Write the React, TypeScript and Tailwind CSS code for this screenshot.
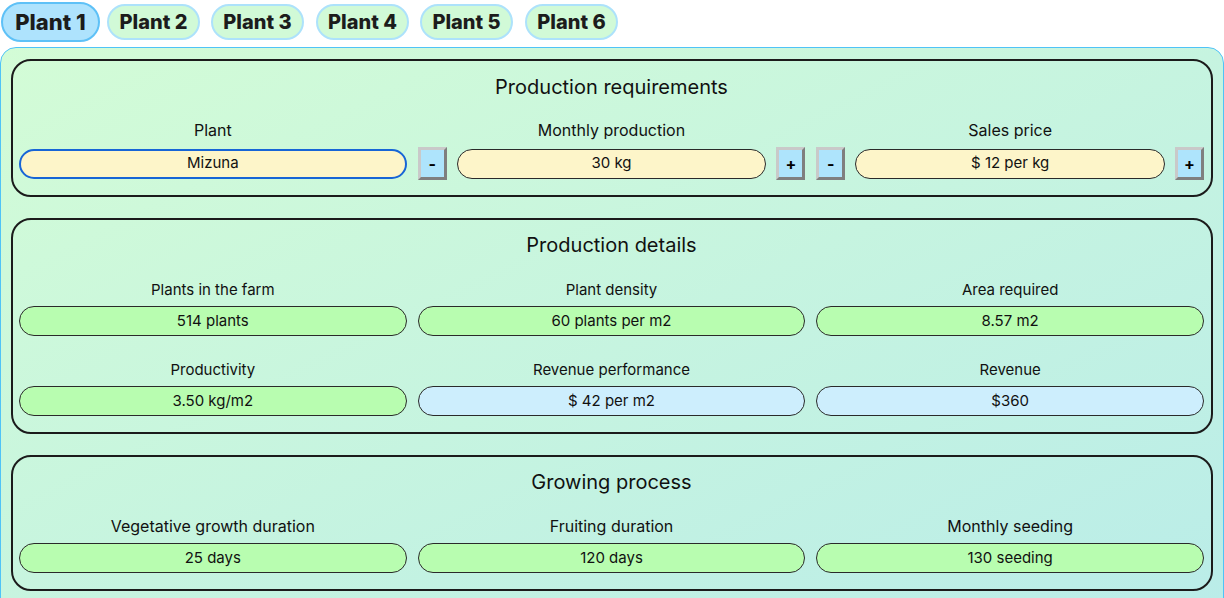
import React from "react";

const font = { fontFamily: "Inter, 'Noto Sans', sans-serif" };

function Tab({ label, active }: { label: string; active?: boolean }) {
  if (active) {
    return (
      <div className="h-[40px] w-[99px] flex items-center justify-center rounded-full border-2 border-[#5ec1f7] bg-[#aee3fd] text-[22px] font-extrabold text-[#1c1c1c]">
        {label}
      </div>
    );
  }
  return (
    <div className="h-[36px] w-[93px] flex items-center justify-center rounded-full border-2 border-[#ade2fb] bg-[#d1fad7] text-[20px] font-extrabold text-[#1c1c1c]">
      {label}
    </div>
  );
}

function StepButton({ sign }: { sign: string }) {
  return (
    <div className="h-[33px] w-[29px] shrink-0 flex items-center justify-center bg-[#aee4fc] border-[3px] border-t-[#c9c9c9] border-l-[#c9c9c9] border-b-[#7f7f7f] border-r-[#7f7f7f] text-[16px] font-bold text-black">
      {sign}
    </div>
  );
}

function Pill({ value, color, focused }: { value: string; color: string; focused?: boolean }) {
  return (
    <div
      className={
        "h-[30px] w-full min-w-0 flex items-center justify-center rounded-full text-[15px] text-[#111] " +
        color +
        (focused ? " border-2 border-[#1765d6]" : " border border-[#2a2a2a]")
      }
    >
      {value}
    </div>
  );
}

function Label({ text, small }: { text: string; small?: boolean }) {
  return (
    <div className={"h-[24px] leading-[24px] text-[#111] text-center " + (small ? "text-[15px]" : "text-[16px]")}>
      {text}
    </div>
  );
}

function Field({ label, value, color, small }: { label: string; value: string; color: string; small?: boolean }) {
  return (
    <div className={"flex flex-col " + (small ? "gap-[4px]" : "gap-[5px]")}>
      <Label text={label} small={small} />
      <Pill value={value} color={color} />
    </div>
  );
}

function Section({ title, children, pt = "pt-[11px]", pb = "pb-[16px]" }: { title: string; children: React.ReactNode; pt?: string; pb?: string }) {
  return (
    <div className={"rounded-[20px] border-2 border-[#1b1b1b] pl-[6px] pr-[7px] " + pt + " " + pb}>
      <div className="h-[28px] leading-[28px] text-[20px] text-[#111] text-center">{title}</div>
      {children}
    </div>
  );
}

const GREEN = "bg-[#b8fdb0]";
const BLUE = "bg-[#cdeefd]";
const YELLOW = "bg-[#fdf5c9]";

export default function App() {
  return (
    <div className="w-[1224px] h-[598px] overflow-hidden bg-white" style={font}>
      <div className="flex items-center pl-[1px] pt-[2px] h-[42px]">
        <Tab label="Plant 1" active />
        <div className="ml-[7px]"><Tab label="Plant 2" /></div>
        <div className="ml-[11px]"><Tab label="Plant 3" /></div>
        <div className="ml-[12px]"><Tab label="Plant 4" /></div>
        <div className="ml-[11px]"><Tab label="Plant 5" /></div>
        <div className="ml-[12px]"><Tab label="Plant 6" /></div>
      </div>
      <div className="mt-[5px] h-[600px] rounded-t-[16px] border border-[#4fc3f7] bg-linear-to-br from-[#d3fcd6] to-[#b9ece9] px-[10px] pt-[11px] flex flex-col gap-[21px]">
        <Section title="Production requirements" pt="pt-[12px]" pb="pb-[15px]">
          <div className="mt-[17px] grid grid-cols-3 gap-x-[11px]">
            <div className="flex flex-col gap-[5px]">
              <Label text="Plant" />
              <div className="h-[33px] flex items-center">
                <Pill value="Mizuna" color={YELLOW} focused />
              </div>
            </div>
            <div className="flex flex-col gap-[5px]">
              <Label text="Monthly production" />
              <div className="h-[33px] flex items-center gap-[10px]">
                <StepButton sign="-" />
                <Pill value="30 kg" color={YELLOW} />
                <StepButton sign="+" />
              </div>
            </div>
            <div className="flex flex-col gap-[5px]">
              <Label text="Sales price" />
              <div className="h-[33px] flex items-center gap-[10px]">
                <StepButton sign="-" />
                <Pill value="$ 12 per kg" color={YELLOW} />
                <StepButton sign="+" />
              </div>
            </div>
          </div>
        </Section>
        <Section title="Production details">
          <div className="mt-[19px] grid grid-cols-3 gap-x-[11px] gap-y-[22px]">
            <Field small label="Plants in the farm" value="514 plants" color={GREEN} />
            <Field small label="Plant density" value="60 plants per m2" color={GREEN} />
            <Field small label="Area required" value="8.57 m2" color={GREEN} />
            <Field small label="Productivity" value="3.50 kg/m2" color={GREEN} />
            <Field small label="Revenue performance" value="$ 42 per m2" color={BLUE} />
            <Field small label="Revenue" value="$360" color={BLUE} />
          </div>
        </Section>
        <Section title="Growing process">
          <div className="mt-[18px] grid grid-cols-3 gap-x-[11px]">
            <Field label="Vegetative growth duration" value="25 days" color={GREEN} />
            <Field label="Fruiting duration" value="120 days" color={GREEN} />
            <Field label="Monthly seeding" value="130 seeding" color={GREEN} />
          </div>
        </Section>
      </div>
    </div>
  );
}
